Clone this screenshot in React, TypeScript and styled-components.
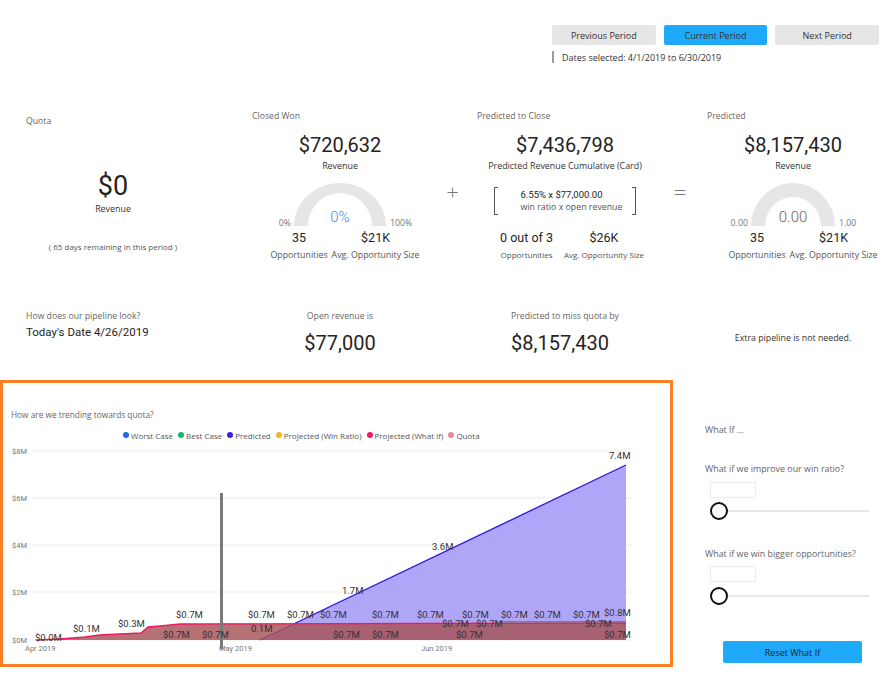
import React from "react";
import styled, { createGlobalStyle } from "styled-components";

const UI = `"Open Sans", "Noto Sans", sans-serif`;
const DIN = `Roboto, "Liberation Sans", sans-serif`;

const Global = createGlobalStyle`
  html, body { margin: 0; padding: 0; background: #ffffff; }
  body { font-family: ${UI}; }
  * { box-sizing: border-box; }
`;

const Page = styled.div`
  width: 894px;
  height: 683px;
  overflow: hidden;
  background: #ffffff;
  display: flex;
  flex-direction: column;
`;

/* ---------- header ---------- */
const Header = styled.div`
  display: flex;
  justify-content: flex-end;
  padding: 25px 15px 0 0;
`;
const PeriodNav = styled.div`
  display: flex;
  flex-direction: column;
  width: 327px;
`;
const ButtonRow = styled.div`
  display: flex;
  gap: 8px;
`;
const PeriodButton = styled.button<{ $active?: boolean }>`
  width: 104px;
  height: 20px;
  border: none;
  border-radius: 2px;
  padding: 0;
  background: ${(p) => (p.$active ? "#1fa9fb" : "#e6e6e6")};
  font-family: ${UI};
  font-size: 9px;
  color: #333;
`;
const DatesRow = styled.div`
  display: flex;
  align-items: center;
  gap: 8px;
  margin-top: 6px;
  height: 12px;
`;
const DatesBar = styled.span`
  width: 2px;
  height: 12px;
  background: #9a9a9a;
`;
const DatesText = styled.span`
  font-size: 9px;
  color: #333;
`;

/* ---------- KPI grid ---------- */
const KpiGrid = styled.div`
  display: grid;
  grid-template-columns: 200px 27px 200px 25px 200px 30px 196px;
  row-gap: 47px;
  padding-left: 13px;
  margin-top: 45px;
`;
const Card = styled.div<{ $col: string }>`
  grid-column: ${(p) => p.$col};
  display: flex;
  flex-direction: column;
  align-items: center;
`;
const CardLabel = styled.div<{ $top?: number; $pad?: number }>`
  align-self: stretch;
  padding-left: ${(p) => p.$pad ?? 12}px;
  margin-top: ${(p) => p.$top ?? 0}px;
  font-size: 8.7px;
  line-height: 16px;
  color: #666;
  white-space: nowrap;
`;
const BigValue = styled.div<{ $size: number; $top: number; $shift?: number }>`
  font-family: ${DIN};
  font-size: ${(p) => p.$size}px;
  line-height: ${(p) => p.$size + 5}px;
  margin-top: ${(p) => p.$top}px;
  margin-left: ${(p) => p.$shift ?? 0}px;
  color: #252423;
  white-space: nowrap;
`;
const SubLabel = styled.div<{ $top: number }>`
  margin-top: ${(p) => p.$top}px;
  font-size: 8.9px;
  line-height: 12px;
  color: #333;
  white-space: nowrap;
`;
const NoteLabel = styled(SubLabel)`
  color: #555;
  font-size: 8px;
`;
const Operator = styled.div<{ $col: string }>`
  grid-column: ${(p) => p.$col};
  display: flex;
  justify-content: center;
  padding-top: 72px;
  font-family: ${UI};
  font-weight: 300;
  font-size: 22px;
  line-height: 22px;
  color: #777;
`;

/* gauge */
const GaugeRow = styled.div`
  display: flex;
  align-items: flex-end;
  margin-top: 11px;
`;
const GaugeSide = styled.span<{ $side: "left" | "right" }>`
  width: 30px;
  font-size: 8.8px;
  line-height: 12px;
  color: #777;
  margin-bottom: -3px;
  ${(p) =>
    p.$side === "left"
      ? "text-align: right; padding-right: 3px;"
      : "text-align: left; padding-left: 4px;"}
`;
const GaugeBox = styled.div<{ $w: number }>`
  position: relative;
  width: ${(p) => p.$w}px;
  height: 43px;
  svg { display: block; }
`;
const GaugeValue = styled.span<{ $blue?: boolean }>`
  position: absolute;
  left: 0;
  right: 0;
  bottom: 0;
  text-align: center;
  font-family: ${DIN};
  font-weight: 300;
  font-size: 15px;
  line-height: 18px;
  color: ${(p) => (p.$blue ? "#3a8ee6" : "#666")};
`;

const Stats = styled.div<{ $shift: number; $top: number; $gap: number }>`
  display: grid;
  grid-template-columns: auto auto;
  column-gap: ${(p) => p.$gap}px;
  margin-top: ${(p) => p.$top}px;
  margin-left: ${(p) => p.$shift}px;
`;
const StatCol = styled.div`
  display: flex;
  flex-direction: column;
  align-items: center;
`;
const StatValue = styled.div`
  font-family: ${DIN};
  font-size: 12.5px;
  line-height: 14px;
  color: #252423;
  white-space: nowrap;
`;
const StatLabel = styled.div<{ $small?: boolean }>`
  margin-top: 4px;
  font-size: ${(p) => (p.$small ? 8 : 8.8)}px;
  line-height: 12px;
  color: #555;
  white-space: nowrap;
`;

/* bracket formula */
const Formula = styled.div`
  display: flex;
  align-items: center;
  margin-top: 14px;
  height: 30px;
`;
const Bracket = styled.span<{ $side: "left" | "right" }>`
  width: 4px;
  height: 28px;
  border: 1.4px solid #555;
  ${(p) => (p.$side === "left" ? "border-right: none;" : "border-left: none;")}
`;
const FormulaText = styled.div`
  display: flex;
  flex-direction: column;
  align-items: flex-start;
  padding: 0 10px 0 23px;
`;
const FormulaTop = styled.div`
  font-family: ${DIN};
  font-size: 9.5px;
  line-height: 13px;
  color: #252423;
`;
const FormulaBottom = styled.div`
  font-size: 8.8px;
  line-height: 13px;
  color: #555;
`;

/* row 2 */
const PipelineCell = styled.div`
  grid-column: 1 / span 2;
  padding-left: 13px;
`;
const TodayDate = styled.div`
  font-family: ${DIN};
  font-weight: 400;
  font-size: 11.5px;
  line-height: 16px;
  color: #252423;
`;
const CenterCell = styled.div<{ $col: string; $top?: number }>`
  grid-column: ${(p) => p.$col};
  display: flex;
  flex-direction: column;
  align-items: center;
  padding-top: ${(p) => p.$top ?? 0}px;
`;
const PlainLabel = styled.div`
  font-size: 8.7px;
  line-height: 16px;
  color: #666;
  white-space: nowrap;
`;
const ExtraText = styled.div`
  font-size: 8.8px;
  line-height: 12px;
  color: #333;
`;

/* ---------- bottom ---------- */
const BottomRow = styled.div`
  display: flex;
  margin-top: 24px;
`;
const ChartBox = styled.div`
  width: 673px;
  height: 287px;
  border: 3px solid #ff7f27;
  padding-top: 26px;
  display: flex;
  flex-direction: column;
  svg { display: block; }
`;
const ChartTitle = styled.div`
  padding-left: 8px;
  font-size: 8.3px;
  line-height: 12px;
  color: #666;
`;
const Legend = styled.div`
  display: flex;
  align-items: center;
  gap: 5px;
  margin-top: 8px;
  padding-left: 120px;
  height: 12px;
`;
const LegendItem = styled.span`
  display: flex;
  align-items: center;
  gap: 2px;
  font-size: 8px;
  color: #555;
  white-space: nowrap;
`;
const Dot = styled.span<{ $c: string }>`
  width: 6px;
  height: 6px;
  border-radius: 50%;
  background: ${(p) => p.$c};
`;
const PlotWrap = styled.div`
  margin-top: 3px;
`;

const WhatIf = styled.div`
  flex: 1;
  display: flex;
  flex-direction: column;
  padding: 43px 25px 0 32px;
`;
const WhatIfText = styled.div<{ $top: number }>`
  margin-top: ${(p) => p.$top}px;
  font-size: 8.9px;
  line-height: 14px;
  color: #666;
  white-space: nowrap;
`;
const ValueInput = styled.div<{ $top: number }>`
  margin: ${(p) => p.$top}px 0 0 5px;
  width: 46px;
  height: 16px;
  border: 1px solid #ececec;
  background: #fff;
`;
const Slider = styled.div<{ $top: number }>`
  margin: ${(p) => p.$top}px 0 0 5px;
  display: flex;
  align-items: center;
  height: 18px;
`;
const Thumb = styled.span`
  width: 18px;
  height: 18px;
  border-radius: 50%;
  border: 2px solid #111;
  background: #fff;
  flex: none;
`;
const Track = styled.span`
  flex: 1;
  height: 2px;
  background: #e6e6e6;
`;
const ResetButton = styled.button`
  margin: 36px 0 0 18px;
  width: 139px;
  height: 22px;
  border: none;
  border-radius: 2px;
  background: #1fa9fb;
  font-family: ${UI};
  font-size: 9px;
  color: #222;
  padding: 0;
`;

/* ---------- pieces ---------- */
function Gauge({ rx, inner, w, value, blue, left, right }: { rx: number; inner: number; w: number; value: string; blue?: boolean; left: string; right: string }) {
  const cx = w / 2;
  const d = `M${cx - rx},43 A${rx},43 0 0 1 ${cx + rx},43 L${cx + inner},43 A${inner},${inner + 1} 0 0 0 ${cx - inner},43 Z`;
  return (
    <GaugeRow>
      <GaugeSide $side="left">{left}</GaugeSide>
      <GaugeBox $w={w}>
        <svg width={w} height={43} viewBox={`0 0 ${w} 43`}>
          <path d={d} fill="#e6e6e6" />
        </svg>
        <GaugeValue $blue={blue}>{value}</GaugeValue>
      </GaugeBox>
      <GaugeSide $side="right">{right}</GaugeSide>
    </GaugeRow>
  );
}

function StatPair({ a, b, shift, top = 5, gap = 4, small }: { a: string; b: string; shift: number; top?: number; gap?: number; small?: boolean }) {
  return (
    <Stats $shift={shift} $top={top} $gap={gap}>
      <StatCol>
        <StatValue>{a}</StatValue>
        <StatLabel $small={small}>Opportunities</StatLabel>
      </StatCol>
      <StatCol>
        <StatValue>{b}</StatValue>
        <StatLabel $small={small}>Avg. Opportunity Size</StatLabel>
      </StatCol>
    </Stats>
  );
}

const legend = [
  { c: "#1e6cf0", t: "Worst Case" },
  { c: "#14b86a", t: "Best Case" },
  { c: "#3a1ee6", t: "Predicted" },
  { c: "#f2b824", t: "Projected (Win Ratio)" },
  { c: "#ef1d5e", t: "Projected (What If)" },
  { c: "#e8899a", t: "Quota" },
];

const dataLabels: [number, number, string][] = [
  [32, 193, "$0.0M"],
  [70, 184, "$0.1M"],
  [115, 179, "$0.3M"],
  [173, 170, "$0.7M"],
  [160, 190, "$0.7M"],
  [199, 190, "$0.7M"],
  [245, 170, "$0.7M"],
  [284, 170, "$0.7M"],
  [248, 184, "0.1M"],
  [339, 146, "1.7M"],
  [429, 102, "3.6M"],
  [606, 11, "7.4M"],
  [317, 170, "$0.7M"],
  [369, 170, "$0.7M"],
  [414, 170, "$0.7M"],
  [459, 170, "$0.7M"],
  [498, 170, "$0.7M"],
  [531, 170, "$0.7M"],
  [570, 170, "$0.7M"],
  [601, 168, "$0.8M"],
  [439, 179, "$0.7M"],
  [473, 179, "$0.7M"],
  [582, 179, "$0.7M"],
  [330, 190, "$0.7M"],
  [369, 190, "$0.7M"],
  [453, 190, "$0.7M"],
  [601, 190, "$0.7M"],
];

const yTicks: [number, string][] = [
  [7, "$8M"],
  [54, "$6M"],
  [101, "$4M"],
  [148, "$2M"],
  [196, "$0M"],
];

function TrendChart() {
  const redPts = "34,196 57,195 82,193 97,191 117,190 138,189 145,183 157,182 177,180 623,179";
  return (
    <svg width={667} height={220} viewBox="0 0 667 220">
      {yTicks.map(([y, t]) => (
        <g key={t}>
          <line x1={29} x2={629} y1={y} y2={y} stroke="#ececec" strokeWidth={1} />
          <text x={9} y={y} dominantBaseline="central" fontFamily={DIN} fontSize={7.5} fill="#777">{t}</text>
        </g>
      ))}
      <polygon points="257,196 623,21 623,196" fill="#b0a6f8" />
      <line x1={257} y1={196} x2={623} y2={21} stroke="#3016e0" strokeWidth={1.3} />
      <polygon points={`${redPts} 623,196 34,196`} fill="#a55256" fillOpacity={0.82} />
      <polyline points={redPts} fill="none" stroke="#f0195f" strokeWidth={1.3} />
      <line x1={493} y1={177.6} x2={623} y2={177.6} stroke="#14b86a" strokeWidth={1.3} />
      <rect x={217} y={49} width={3} height={156} fill="#7a7a7a" />
      {dataLabels.map(([x, y, t], i) => (
        <text key={i} x={x} y={y} dominantBaseline="central" fontFamily={DIN} fontSize={9.5} fill="#333">{t}</text>
      ))}
      <text x={22} y={204} dominantBaseline="central" fontFamily={DIN} fontSize={7.5} fill="#777">Apr 2019</text>
      <text x={216} y={204} dominantBaseline="central" fontFamily={DIN} fontSize={7.5} fill="#777">May 2019</text>
      <text x={418} y={204} dominantBaseline="central" fontFamily={DIN} fontSize={7.5} fill="#777">Jun 2019</text>
    </svg>
  );
}

export default function App() {
  return (
    <Page>
      <Global />
      <Header>
        <PeriodNav>
          <ButtonRow>
            <PeriodButton>Previous Period</PeriodButton>
            <PeriodButton $active>Current Period</PeriodButton>
            <PeriodButton>Next Period</PeriodButton>
          </ButtonRow>
          <DatesRow>
            <DatesBar />
            <DatesText>Dates selected: 4/1/2019 to 6/30/2019</DatesText>
          </DatesRow>
        </PeriodNav>
      </Header>

      <KpiGrid>
        <Card $col="1">
          <CardLabel $top={5} $pad={13}>Quota</CardLabel>
          <BigValue $size={27} $top={41}>$0</BigValue>
          <SubLabel $top={1}>Revenue</SubLabel>
          <NoteLabel $top={26}>( 65 days remaining in this period )</NoteLabel>
        </Card>

        <Card $col="3">
          <CardLabel>Closed Won</CardLabel>
          <BigValue $size={20} $top={9}>$720,632</BigValue>
          <SubLabel $top={2}>Revenue</SubLabel>
          <Gauge rx={46} inner={32} w={92} value="0%" blue left="0%" right="100%" />
          <StatPair a="35" b="$21K" shift={10} />
        </Card>

        <Operator $col="4">+</Operator>

        <Card $col="5">
          <CardLabel>Predicted to Close</CardLabel>
          <BigValue $size={20} $top={9}>$7,436,798</BigValue>
          <SubLabel $top={2}>Predicted Revenue Cumulative (Card)</SubLabel>
          <Formula>
            <Bracket $side="left" />
            <FormulaText>
              <FormulaTop>6.55% x $77,000.00</FormulaTop>
              <FormulaBottom>win ratio x open revenue</FormulaBottom>
            </FormulaText>
            <Bracket $side="right" />
          </Formula>
          <StatPair a="0 out of 3" b="$26K" shift={14} top={15} gap={11} small />
        </Card>

        <Operator $col="6">=</Operator>

        <Card $col="7">
          <CardLabel>Predicted</CardLabel>
          <BigValue $size={20} $top={9}>$8,157,430</BigValue>
          <SubLabel $top={2}>Revenue</SubLabel>
          <Gauge rx={42} inner={28} w={84} value="0.00" left="0.00" right="1.00" />
          <StatPair a="35" b="$21K" shift={20} />
        </Card>

        <PipelineCell>
          <PlainLabel>How does our pipeline look?</PlainLabel>
          <TodayDate>Today's Date 4/26/2019</TodayDate>
        </PipelineCell>
        <CenterCell $col="3">
          <PlainLabel>Open revenue is</PlainLabel>
          <BigValue $size={20} $top={7}>$77,000</BigValue>
        </CenterCell>
        <CenterCell $col="5">
          <PlainLabel>Predicted to miss quota by</PlainLabel>
          <BigValue $size={20} $top={7} $shift={-10}>$8,157,430</BigValue>
        </CenterCell>
        <CenterCell $col="7" $top={24}>
          <ExtraText>Extra pipeline is not needed.</ExtraText>
        </CenterCell>
      </KpiGrid>

      <BottomRow>
        <ChartBox>
          <ChartTitle>How are we trending towards quota?</ChartTitle>
          <Legend>
            {legend.map((l) => (
              <LegendItem key={l.t}>
                <Dot $c={l.c} />
                {l.t}
              </LegendItem>
            ))}
          </Legend>
          <PlotWrap>
            <TrendChart />
          </PlotWrap>
        </ChartBox>
        <WhatIf>
          <WhatIfText $top={0}>What If ...</WhatIfText>
          <WhatIfText $top={25}>What if we improve our win ratio?</WhatIfText>
          <ValueInput $top={6} />
          <Slider $top={4}>
            <Thumb />
            <Track />
          </Slider>
          <WhatIfText $top={27}>What if we win bigger opportunities?</WhatIfText>
          <ValueInput $top={5} />
          <Slider $top={5}>
            <Thumb />
            <Track />
          </Slider>
          <ResetButton>Reset What If</ResetButton>
        </WhatIf>
      </BottomRow>
    </Page>
  );
}
